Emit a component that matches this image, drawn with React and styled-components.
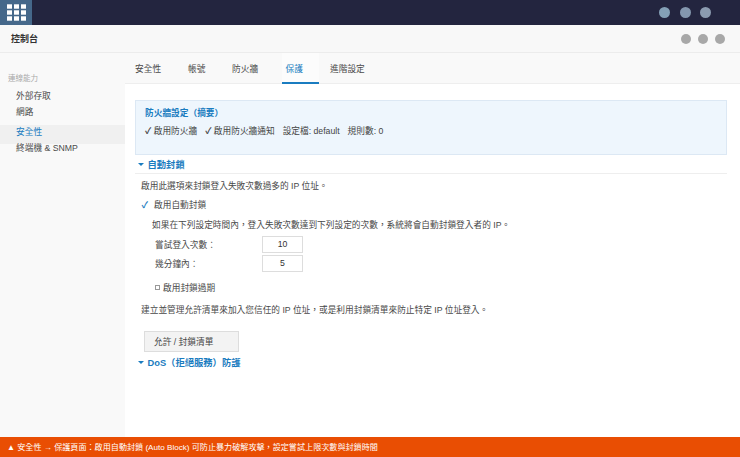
import React from "react";
import styled, { createGlobalStyle } from "styled-components";

const GlobalStyle = createGlobalStyle`
  html, body { margin: 0; padding: 0; background: #fff; }
  body { font-family: "Liberation Sans", "Noto Sans CJK TC", sans-serif; font-size: 8.7px; color: #484848; }
`;

const Page = styled.div`
  width: 740px;
  height: 457px;
  display: flex;
  flex-direction: column;
  overflow: hidden;
`;

const TopBar = styled.div`
  height: 25px;
  flex: none;
  display: flex;
  align-items: center;
  justify-content: space-between;
  background: #23253f;
`;

const AppButton = styled.div`
  box-sizing: border-box;
  width: 32px;
  height: 25px;
  padding-left: 1px;
  display: flex;
  align-items: center;
  justify-content: center;
  background: #45688a;
`;

const Dots = styled.div`
  display: flex;
  gap: ${(p) => p.$gap}px;
  margin-right: ${(p) => p.$right}px;
`;

const Dot = styled.span`
  width: ${(p) => p.$size}px;
  height: ${(p) => p.$size}px;
  border-radius: 50%;
  background: ${(p) => p.$color};
`;

const TitleBar = styled.div`
  height: 27px;
  flex: none;
  display: flex;
  align-items: center;
  justify-content: space-between;
  padding-left: 11px;
  background: #f8f8f8;
  border-bottom: 1px solid #ececec;
`;

const Title = styled.div`
  font-size: 9px;
  font-weight: bold;
  color: #333;
`;

const Body = styled.div`
  flex: 1;
  min-height: 0;
  display: flex;
`;

const Sidebar = styled.div`
  width: 125px;
  flex: none;
  padding-top: 20px;
  background: #f9f9f9;
  box-sizing: border-box;
`;

const SideLabel = styled.div`
  padding-left: 8px;
  margin-bottom: 3px;
  height: 12px;
  line-height: 12px;
  font-size: 7.5px;
  color: #aaa;
`;

const SideItem = styled.div`
  height: ${(p) => p.$h}px;
  line-height: ${(p) => p.$line}px;
  margin-top: ${(p) => p.$top || 0}px;
  padding-left: 16px;
  color: ${(p) => (p.$active ? "#1a7cc0" : "#4a4a4a")};
  background: ${(p) => (p.$active ? "#f0f0f0" : "transparent")};
`;

const Main = styled.div`
  flex: 1;
  min-width: 0;
  display: flex;
  flex-direction: column;
  background: #fff;
`;

const Tabs = styled.div`
  height: 30px;
  flex: none;
  display: flex;
  background: #f9f9f9;
  border-bottom: 1px solid #eee;
`;

const Tab = styled.div`
  box-sizing: border-box;
  height: 31px;
  width: ${(p) => p.$w}px;
  padding-left: ${(p) => p.$pad}px;
  line-height: 33px;
  color: ${(p) => (p.$active ? "#1a7cc0" : "#4a4a4a")};
  background: ${(p) => (p.$active ? "#fcfcfc" : "transparent")};
  border-bottom: ${(p) => (p.$active ? "2px solid #1a7cc0" : "none")};
`;

const Content = styled.div`
  flex: 1;
  padding: 16px 13px 0 9.5px;
`;

const Summary = styled.div`
  height: 55px;
  box-sizing: border-box;
  padding: 5px 9.5px 0;
  background: #eef6fd;
  border: 1px solid #dce8f4;
`;

const SummaryTitle = styled.div`
  height: 14px;
  line-height: 14px;
  font-weight: bold;
  color: #1a7cc0;
`;

const SummaryLine = styled.div`
  display: flex;
  gap: 8px;
  margin-top: 4px;
  height: 14px;
  line-height: 14px;
  color: #444;
`;

const Tick = styled.span`
  display: inline-block;
  width: 8.7px;
  font-weight: bold;
`;

const SectionHead = styled.div`
  display: flex;
  align-items: center;
  gap: 3.5px;
  height: ${(p) => p.$h}px;
  padding-left: 3.5px;
  font-size: 9.3px;
  font-weight: bold;
  color: #1a7cc0;
  border-bottom: ${(p) => (p.$rule ? "1px solid #eee" : "none")};
`;

const Caret = styled.span`
  width: 0;
  height: 0;
  border-left: 3px solid transparent;
  border-right: 3px solid transparent;
  border-top: 3px solid #1a7cc0;
`;

const Line = styled.div`
  display: flex;
  align-items: center;
  height: 14px;
  margin-top: ${(p) => p.$top || 0}px;
  padding-left: ${(p) => p.$left || 0}px;
`;

const CheckMark = styled.span`
  width: 12.5px;
  font-size: 9px;
  font-weight: bold;
  color: #1a7cc0;
`;

const Field = styled.div`
  display: flex;
  align-items: center;
  height: 17px;
  margin-top: ${(p) => p.$top}px;
  padding-left: 20.5px;
`;

const FieldLabel = styled.div`
  width: 107px;
`;

const NumberBox = styled.div`
  width: 41px;
  height: 17px;
  box-sizing: border-box;
  line-height: 15px;
  text-align: center;
  background: #fff;
  border: 1px solid #ddd;
  color: #333;
`;

const BoxMark = styled.span`
  width: 3px;
  height: 3px;
  margin-right: 3px;
  border: 0.5px solid #999;
  background: #fff;
`;

const ListButton = styled.div`
  box-sizing: border-box;
  width: 95px;
  height: 21px;
  margin: 15px 0 0 9.5px;
  padding-left: 9px;
  line-height: 21px;
  background: #f3f3f3;
  border: 1px solid #ddd;
  color: #444;
`;

const Notice = styled.div`
  height: 20px;
  flex: none;
  padding-left: 7px;
  line-height: 21px;
  font-size: 8.1px;
  background: #e94e03;
  color: #fff;
  white-space: nowrap;
`;

function GridIcon() {
  const cells = [];
  for (let y = 0; y < 3; y++) {
    for (let x = 0; x < 3; x++) {
      cells.push(<rect key={`${x}-${y}`} x={x * 7} y={y * 6} width="5" height="4.4" fill="#fff" />);
    }
  }
  return (
    <svg width="19" height="17" viewBox="0 0 19 16.4">
      {cells}
    </svg>
  );
}

function App() {
  return (
    <Page>
      <GlobalStyle />
      <TopBar>
        <AppButton>
          <GridIcon />
        </AppButton>
        <Dots $gap={9.5} $right={29}>
          <Dot $size={11} $color="#84a0b6" />
          <Dot $size={11} $color="#8497ae" />
          <Dot $size={11} $color="#8b9bb0" />
        </Dots>
      </TopBar>
      <TitleBar>
        <Title>控制台</Title>
        <Dots $gap={7} $right={15}>
          <Dot $size={10} $color="#a8a8a8" />
          <Dot $size={10} $color="#a8a8a8" />
          <Dot $size={10} $color="#a8a8a8" />
        </Dots>
      </TitleBar>
      <Body>
        <Sidebar>
          <SideLabel>連線能力</SideLabel>
          <SideItem $h={16} $line={16}>外部存取</SideItem>
          <SideItem $h={16} $line={16}>網路</SideItem>
          <SideItem $h={19} $line={14} $top={5} $active>安全性</SideItem>
          <SideItem $h={17} $line={9}>終端機 &amp; SNMP</SideItem>
        </Sidebar>
        <Main>
          <Tabs>
            <Tab $w={53} $pad={10}>安全性</Tab>
            <Tab $w={44} $pad={10}>帳號</Tab>
            <Tab $w={60} $pad={10}>防火牆</Tab>
            <Tab $w={37} $pad={3.5} $active>保護</Tab>
            <Tab $w={60} $pad={11}>進階設定</Tab>
          </Tabs>
          <Content>
            <Summary>
              <SummaryTitle>防火牆設定（摘要）</SummaryTitle>
              <SummaryLine>
                <span><Tick>✓</Tick>啟用防火牆</span>
                <span><Tick>✓</Tick>啟用防火牆通知</span>
                <span>設定檔: default</span>
                <span>規則數: 0</span>
              </SummaryLine>
            </Summary>
            <SectionHead $h={18} $rule>
              <Caret />
              自動封鎖
            </SectionHead>
            <Line $left={6.5} $top={4}>啟用此選項來封鎖登入失敗次數過多的 IP 位址。</Line>
            <Line $left={7} $top={5}>
              <CheckMark>✓</CheckMark>
              啟用自動封鎖
            </Line>
            <Line $left={17.5} $top={6}>如果在下列設定時間內，登入失敗次數達到下列設定的次數，系統將會自動封鎖登入者的 IP。</Line>
            <Field $top={5}>
              <FieldLabel>嘗試登入次數：</FieldLabel>
              <NumberBox>10</NumberBox>
            </Field>
            <Field $top={2}>
              <FieldLabel>幾分鐘內：</FieldLabel>
              <NumberBox>5</NumberBox>
            </Field>
            <Line $left={20.5} $top={8}>
              <BoxMark />
              啟用封鎖過期
            </Line>
            <Line $left={6.5} $top={8}>建立並管理允許清單來加入您信任的 IP 位址，或是利用封鎖清單來防止特定 IP 位址登入。</Line>
            <ListButton>允許 / 封鎖清單</ListButton>
            <SectionHead $h={20}>
              <Caret />
              DoS（拒絕服務）防護
            </SectionHead>
          </Content>
        </Main>
      </Body>
      <Notice>▲ 安全性 → 保護頁面：啟用自動封鎖 (Auto Block) 可防止暴力破解攻擊，設定嘗試上限次數與封鎖時間</Notice>
    </Page>
  );
}

export default App;
